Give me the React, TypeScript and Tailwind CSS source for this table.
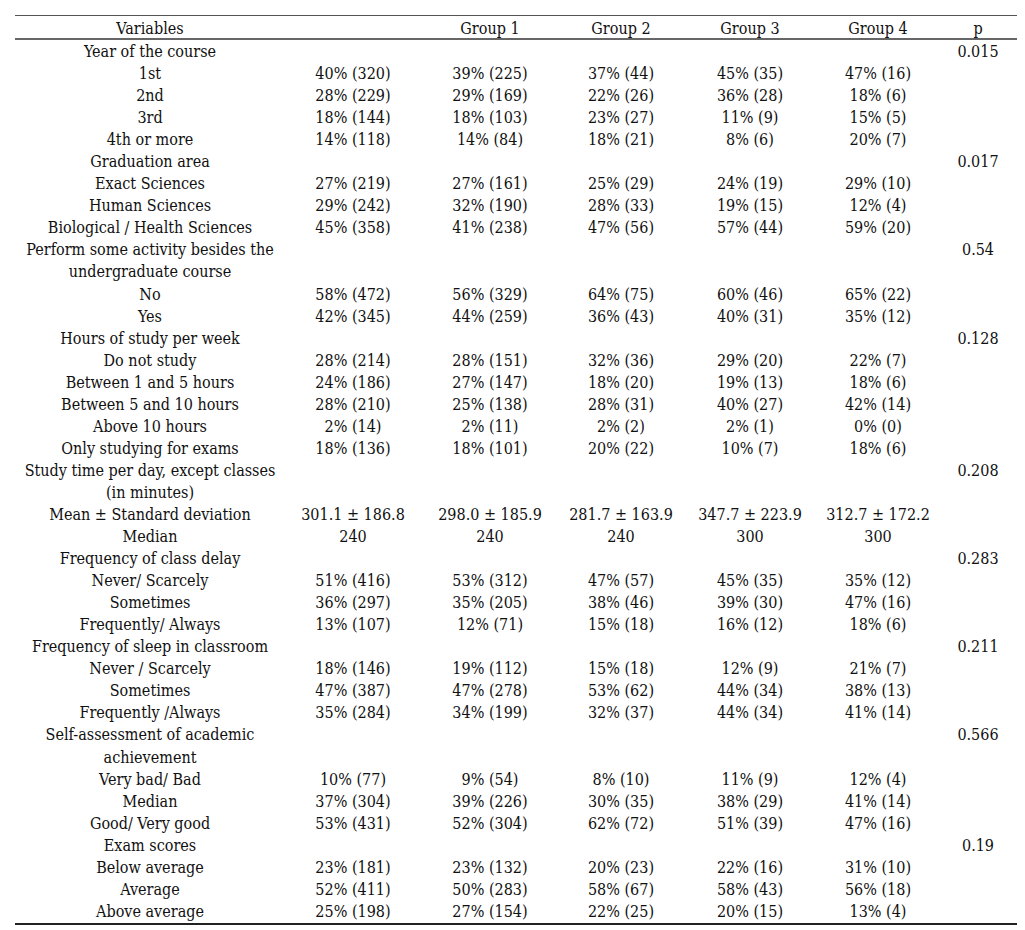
import React from "react";

type Row = {
  label: string[];
  cells?: string[];
  p?: string;
};

const rows: Row[] = [
  { label: ["Year of the course"], p: "0.015" },
  { label: ["1st"], cells: ["40% (320)", "39% (225)", "37% (44)", "45% (35)", "47% (16)"] },
  { label: ["2nd"], cells: ["28% (229)", "29% (169)", "22% (26)", "36% (28)", "18% (6)"] },
  { label: ["3rd"], cells: ["18% (144)", "18% (103)", "23% (27)", "11% (9)", "15% (5)"] },
  { label: ["4th or more"], cells: ["14% (118)", "14% (84)", "18% (21)", "8% (6)", "20% (7)"] },
  { label: ["Graduation area"], p: "0.017" },
  { label: ["Exact Sciences"], cells: ["27% (219)", "27% (161)", "25% (29)", "24% (19)", "29% (10)"] },
  { label: ["Human Sciences"], cells: ["29% (242)", "32% (190)", "28% (33)", "19% (15)", "12% (4)"] },
  { label: ["Biological / Health Sciences"], cells: ["45% (358)", "41% (238)", "47% (56)", "57% (44)", "59% (20)"] },
  { label: ["Perform some activity besides the", "undergraduate course"], p: "0.54" },
  { label: ["No"], cells: ["58% (472)", "56% (329)", "64% (75)", "60% (46)", "65% (22)"] },
  { label: ["Yes"], cells: ["42% (345)", "44% (259)", "36% (43)", "40% (31)", "35% (12)"] },
  { label: ["Hours of study per week"], p: "0.128" },
  { label: ["Do not study"], cells: ["28% (214)", "28% (151)", "32% (36)", "29% (20)", "22% (7)"] },
  { label: ["Between 1 and 5 hours"], cells: ["24% (186)", "27% (147)", "18% (20)", "19% (13)", "18% (6)"] },
  { label: ["Between 5 and 10 hours"], cells: ["28% (210)", "25% (138)", "28% (31)", "40% (27)", "42% (14)"] },
  { label: ["Above 10 hours"], cells: ["2% (14)", "2% (11)", "2% (2)", "2% (1)", "0% (0)"] },
  { label: ["Only studying for exams"], cells: ["18% (136)", "18% (101)", "20% (22)", "10% (7)", "18% (6)"] },
  { label: ["Study time per day, except classes", "(in minutes)"], p: "0.208" },
  { label: ["Mean ± Standard deviation"], cells: ["301.1 ± 186.8", "298.0 ± 185.9", "281.7 ± 163.9", "347.7 ± 223.9", "312.7 ± 172.2"] },
  { label: ["Median"], cells: ["240", "240", "240", "300", "300"] },
  { label: ["Frequency of class delay"], p: "0.283" },
  { label: ["Never/ Scarcely"], cells: ["51% (416)", "53% (312)", "47% (57)", "45% (35)", "35% (12)"] },
  { label: ["Sometimes"], cells: ["36% (297)", "35% (205)", "38% (46)", "39% (30)", "47% (16)"] },
  { label: ["Frequently/ Always"], cells: ["13% (107)", "12% (71)", "15% (18)", "16% (12)", "18% (6)"] },
  { label: ["Frequency of sleep in classroom"], p: "0.211" },
  { label: ["Never / Scarcely"], cells: ["18% (146)", "19% (112)", "15% (18)", "12% (9)", "21% (7)"] },
  { label: ["Sometimes"], cells: ["47% (387)", "47% (278)", "53% (62)", "44% (34)", "38% (13)"] },
  { label: ["Frequently /Always"], cells: ["35% (284)", "34% (199)", "32% (37)", "44% (34)", "41% (14)"] },
  { label: ["Self-assessment of academic", "achievement"], p: "0.566" },
  { label: ["Very bad/ Bad"], cells: ["10% (77)", "9% (54)", "8% (10)", "11% (9)", "12% (4)"] },
  { label: ["Median"], cells: ["37% (304)", "39% (226)", "30% (35)", "38% (29)", "41% (14)"] },
  { label: ["Good/ Very good"], cells: ["53% (431)", "52% (304)", "62% (72)", "51% (39)", "47% (16)"] },
  { label: ["Exam scores"], p: "0.19" },
  { label: ["Below average"], cells: ["23% (181)", "23% (132)", "20% (23)", "22% (16)", "31% (10)"] },
  { label: ["Average"], cells: ["52% (411)", "50% (283)", "58% (67)", "58% (43)", "56% (18)"] },
  { label: ["Above average"], cells: ["25% (198)", "27% (154)", "22% (25)", "20% (15)", "13% (4)"] },
];

const cols = "grid grid-cols-[270px_136px_138px_124px_134px_122px_78px] text-center";

export default function App() {
  return (
    <div
      className="w-[1025px] h-[930px] overflow-hidden bg-white text-[#111] text-[16px] leading-[22.05px] [font-stretch:condensed]"
      style={{ fontFamily: '"DejaVu Serif", "Liberation Serif", serif' }}
    >
      <div className="pl-[15px] pt-[15px]">
        <div className="w-[1002px] border-t border-[#555]">
          {/* header */}
          <div className={`${cols} h-[24px] pt-[2px] items-center border-b-2 border-[#666]`}>
            <div>Variables</div>
            <div></div>
            <div>Group 1</div>
            <div>Group 2</div>
            <div>Group 3</div>
            <div>Group 4</div>
            <div>p</div>
          </div>
          <div className="border-b-2 border-[#222] pt-px">
            {rows.map((r, i) => (
              <div key={i} className={`${cols} items-start`}>
                <div>
                  {r.label.map((l, j) => (
                    <div key={j}>{l}</div>
                  ))}
                </div>
                {(r.cells ?? ["", "", "", "", ""]).map((c, j) => (
                  <div key={j}>{c}</div>
                ))}
                <div>{r.p ?? ""}</div>
              </div>
            ))}
          </div>
        </div>
      </div>
    </div>
  );
}
